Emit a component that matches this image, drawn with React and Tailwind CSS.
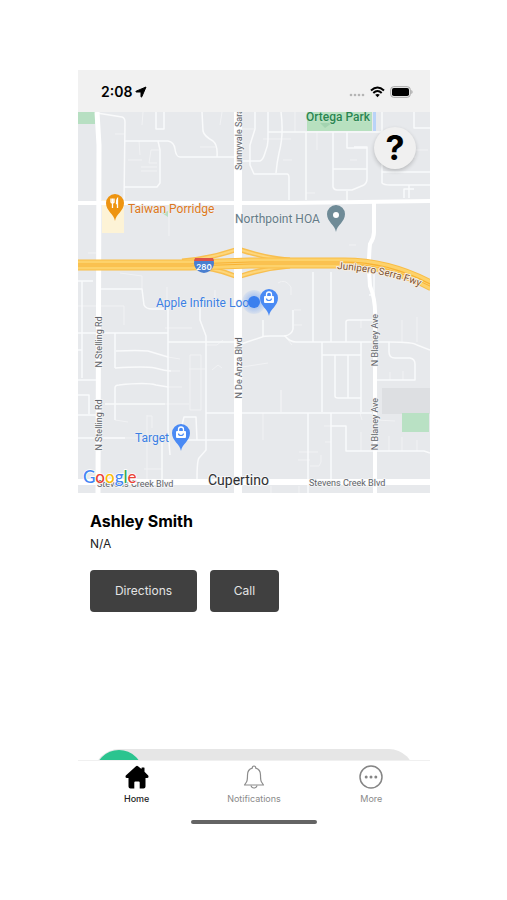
const minorRoads = [
  'M97 113L122 117Q125 118 125 122L124 203',
  'M124 141H168Q174 142 175 149Q176 157 180 157H235',
  'M156 112V129H164V112',
  'M202 112L203 131Q204 136 213 141Q218 145 217 157',
  'M124 187H157L160 183V150L158 141',
  'M255 112V129L250 145V165L254 174H287Q289 174 289 178V200',
  'M281 112Q284 135 279 153Q277 162 276 173',
  'M268 112V140Q268 146 265 153Q263 160 260 161H240',
  'M268 132H394',
  'M333 132V187Q334 190 337 190H352L364 185Q367 183 367 179V147H354',
  'M347 132V148H367',
  'M333 169H367',
  'M414 112V128H430',
  'M382 112V140',
  'M382 162V183Q384 185 390 185H430M382 172H430',
  'M306 132V200',
  'M347 191V201',
  'M409 198V185M404 198V189H414',
  'M78 281H93M82 281V378M100 289H142L144 305Q146 309 152 309H168',
  'M78 333H168M78 350H82',
  'M168 309V430L170 455',
  'M115 333V368M116 351Q138 350 148 351L168 357',
  'M115 368Q145 366 155 368Q166 371 171 371',
  'M115 420V388Q115 385 119 385Q146 382 156 385L168 387',
  'M105 404H165',
  'M168 342H235',
  'M200 300V320L206 336V450L199 458Q197 461 197 479',
  'M78 380H96M78 395H89V414M78 415H97',
  'M206 413H235M241 413H372',
  'M241 344L262 337Q264 336 270 336H285Q290 342 296 342H390Q413 342 417 345L430 350',
  'M313 272V342M331 272V342',
  'M346 342V322Q346 320 349 320H374',
  'M322 342V412M322 355H361M335 355V396Q335 398 338 398H361M348 355V398M361 342V412',
  'M389 342V352Q389 358 395 358H410Q415 359 415 364V380H376',
  'M374 270V295H369',
  'M308 413V493M331 413V479M331 426H346V451H424L430 453',
  'M181 440H235M78 438H125',
  'M182 425L184 417H196L197 440',
  'M162 440V479',
  'M293 310V329Q292 335 284 336',
  'M263 320V336',
]

const lanes = [
  'M143 112L142 125M115 134H124M139 141L140 155M159 150H151L149 163H157M141 167H157M141 171H157M200 147H217M240 129H254M263 139H291M283 160H292M317 132V150',
  'M128 160H142M220 125L222 112M295 112V132M357 160H350M428 150H415M400 157H416',
  'M169 212V236M88 253H96M306 193H315M349 245H356M120 273L142 276V289M167 287V300M215 290V305',
  'M124 306V325M165 328H192M78 306H124M190 355H201V410H190ZM189 369H205M206 345H217L223 340M212 370L218 365L222 368M168 357L180 359M168 371H180M168 387H182M165 404H189',
  'M144 469H162M147 415V479M147 416H152V428M115 420L128 422M242 367L268 363M281 390V412M263 413V440M294 310H301M294 325H302M285 336L292 345',
  'M278 283Q285 278 291 287V295M402 320V342M417 317V342M361 320V328M389 436V451M402 437V451M417 440V451M361 432V451M310 466H319L321 462V455M299 452H318M298 460H310M324 426H331M325 442H331M390 372V380M403 371V380M376 420L395 421',
  'M299 486V493M271 486V493M360 413L362 420M281 390V412M104 438H144M120 489H140',
]

const inter = "font-['Inter',sans-serif]"
const roboto = "font-['Roboto',sans-serif]"

const freeway = 'M78 265H190L250 263H340Q388 262 432 286'
const ramps = 'M182 261Q208 259 235 250M290 260Q270 259 241 250M190 267Q213 267 235 276M290 266Q265 268 241 276'

function Pin({ x, y, color, children }) {
  return (
    <g transform={`translate(${x} ${y})`}>
      <path d="M0 27C-1 20-9 17-9 9A9 9 0 1 1 9 9C9 17 1 20 0 27Z" fill={color} />
      {children}
    </g>
  )
}

function Bag() {
  return (
    <>
      <rect x="-5" y="7" width="10" height="7" rx="1" fill="#fff" />
      <path d="M-2.500 7V5.500A2.500 2.500 0 0 1 2.500 5.500V7" fill="none" stroke="#fff" strokeWidth="1.300" />
      <path d="M-2.500 9.500A2.500 2 0 0 0 2.500 9.500" fill="none" stroke="#4a8af4" strokeWidth="1.200" />
    </>
  )
}

function RoadLabel({ x, y, children, anchor = 'middle' }) {
  return (
    <text
      transform={`translate(${x} ${y}) rotate(-90)`}
      textAnchor={anchor}
      className={`${roboto} text-[9px]`}
      fill="#5f6368"
      stroke="#f4f5f6"
      strokeWidth="1.500"
      paintOrder="stroke"
    >
      {children}
    </text>
  )
}

function CityMap() {
  return (
    <svg viewBox="78 112 352 381" className="block w-full h-auto" role="img" aria-label="Map of Cupertino">
      <defs>
        <path id="junipero" d="M337 269Q385 272 427 289" />
        <radialGradient id="glow">
          <stop offset="0.5" stopColor="#4285f4" stopOpacity="0.35" />
          <stop offset="1" stopColor="#4285f4" stopOpacity="0.08" />
        </radialGradient>
      </defs>
      <rect x="78" y="112" width="352" height="381" fill="#e7e9ec" />
      <rect x="78" y="112" width="17" height="12" fill="#b7dfc2" />
      <rect x="307" y="112" width="65" height="19" fill="#b7e0bf" />
      <path d="M320 123H332L325 128Z" fill="#a3d3b0" />
      <rect x="373" y="112" width="3" height="19" fill="#b9d3f8" />
      <rect x="102" y="200" width="22" height="33" fill="#fdf3d6" />
      <rect x="382" y="388" width="48" height="26" fill="#dddfe2" />
      <rect x="402" y="413" width="27" height="19" fill="#b9e1c4" />
      <path d="M162 213L168 211L168 217Z" fill="#b7dfc2" />

      <g fill="none" stroke="#f1f2f4" strokeWidth="1">
        {lanes.map((d) => <path key={d} d={d} />)}
      </g>
      <g fill="none" stroke="#f9fafb" strokeWidth="1.500" strokeLinejoin="round">
        {minorRoads.map((d) => <path key={d} d={d} />)}
      </g>

      <g fill="none" stroke="#fff">
        <path d="M97 112L99 145L98 493" strokeWidth="5" />
        <path d="M78 203H240L292 203L430 201" strokeWidth="4" />
        <path d="M374 202V232Q374 238 370 244Q368 262 370 286Q376 300 375 320V493" strokeWidth="4" />
        <path d="M78 482H430" strokeWidth="6" />
      </g>

      {/* freeway ramps sit under the boulevard, the freeway crosses over it */}
      <g fill="none">
        <path d={ramps} stroke="#f8bf50" strokeWidth="5" />
        <path d={ramps} stroke="#fdd67c" strokeWidth="2" />
        <path d="M238 112V493" stroke="#fff" strokeWidth="8" />
        <path d={freeway} stroke="#f9bd45" strokeWidth="11" />
        <path d={freeway} stroke="#fdd26b" strokeWidth="9" />
        <path d={freeway} stroke="#f8b232" strokeWidth="3" />
        <path d={freeway} stroke="#fcd070" strokeWidth="1" />
      </g>

      <path d="M195 259H213Q215 263 213 267Q211 272 204 273Q197 272 195 267Q193 263 195 259Z" fill="#4a7fd0" />
      <path d="M195 258H213L214 261H194Z" fill="#dc5148" />
      <text x="204" y="270" textAnchor="middle" className={`${inter} text-[8px] font-semibold`} fill="#fff">280</text>

      <RoadLabel x={242} y={170} anchor="start">Sunnyvale Sara</RoadLabel>
      <RoadLabel x={102} y={342}>N Stelling Rd</RoadLabel>
      <RoadLabel x={102} y={425}>N Stelling Rd</RoadLabel>
      <RoadLabel x={242} y={368}>N De Anza Blvd</RoadLabel>
      <RoadLabel x={378} y={340}>N Blaney Ave</RoadLabel>
      <RoadLabel x={378} y={424}>N Blaney Ave</RoadLabel>

      <g className={`${roboto} text-[9px]`} fill="#5f6368" stroke="#f6f7f8" strokeWidth="1.500" paintOrder="stroke">
        <text x="97" y="487">Stevens Creek Blvd</text>
        <text x="309" y="486">Stevens Creek Blvd</text>
      </g>
      <text className={`${roboto} text-[10px]`} fill="#7d5230" stroke="#f6ede2" strokeWidth="2" paintOrder="stroke">
        <textPath href="#junipero">Junipero Serra Fwy</textPath>
      </text>

      <g className={`${roboto} text-[12px]`} stroke="#f0f1f3" strokeWidth="1" paintOrder="stroke">
        <text x="306" y="121" fill="#2a8551" className="font-medium" stroke="#c5e6cd">Ortega Park</text>
        <text x="128" y="213" fill="#dd7820">Taiwan Porridge</text>
        <text x="235" y="223" fill="#647b87">Northpoint HOA</text>
        <text x="156" y="307" fill="#3b7fe3">Apple Infinite Loo</text>
        <text x="135" y="442" fill="#3b7fe3">Target</text>
      </g>
      <text x="208" y="485" className={`${roboto} text-[14px]`} fill="#2f3033" stroke="#f6f7f8" strokeWidth="2" paintOrder="stroke">Cupertino</text>

      <Pin x={115} y={194} color="#ee9410">
        <path d="M-4 4.500V8Q-4 9-2.500 9Q-1 9-1 8V4.500M-2.500 4.500V14M2.500 14V4.500Q1.500 5.500 1.500 9.500H3" fill="none" stroke="#fff" strokeWidth="1.300" />
      </Pin>
      <Pin x={336} y={205} color="#6f8b97">
        <circle cx="0" cy="10" r="3" fill="#fff" />
      </Pin>
      <circle cx="254" cy="302" r="12" fill="url(#glow)" />
      <Pin x={269} y={289} color="#4a8af4"><Bag /></Pin>
      <circle cx="254" cy="302" r="6" fill="#3b7fee" />
      <Pin x={181} y={424} color="#4a8af4"><Bag /></Pin>

      <text x="83" y="483" className="font-['Lato',sans-serif] text-[17px] font-medium" stroke="#fff" strokeWidth="1.500" paintOrder="stroke">
        <tspan fill="#4285f4">G</tspan>
        <tspan fill="#ea4335">o</tspan>
        <tspan fill="#fbbc05">o</tspan>
        <tspan fill="#4285f4">g</tspan>
        <tspan fill="#34a853">l</tspan>
        <tspan fill="#ea4335">e</tspan>
      </text>
    </svg>
  )
}

function StatusBar() {
  return (
    <header className="flex h-[42px] items-center justify-between bg-[#f1f1f1] pl-[23px] pr-[17px] pt-[2px]">
      <div className="flex items-center gap-[3px]">
        <span className="text-[14px] leading-5 font-semibold">2:08</span>
        <svg viewBox="0 0 12 12" className="size-3">
          <path d="M11 1L6.800 10.800Q6.200 11.600 6 10.600V6H1.300Q.4 5.800 1.100 5.200Z" fill="#000" stroke="#000" strokeLinejoin="round" strokeWidth="1" />
        </svg>
      </div>
      <div className="flex items-center gap-[5px]">
        <svg viewBox="0 0 16 12" className="h-3 w-4">
          <g fill="#b5b5b5">
            <circle cx="2" cy="9" r="1.300" />
            <circle cx="6" cy="9" r="1.300" />
            <circle cx="10" cy="9" r="1.300" />
            <circle cx="14" cy="9" r="1.300" />
          </g>
        </svg>
        <svg viewBox="0 0 15 12" className="h-3 w-[15px]">
          <path d="M1 4.500Q7.500-1.500 14 4.500M3.300 7Q7.500 3 11.700 7" fill="none" stroke="#000" strokeWidth="2" />
          <path d="M5.200 8.800Q7.500 7 9.800 8.800L7.500 11.300Z" fill="#000" />
        </svg>
        <svg viewBox="0 0 23 12" className="h-3 w-[23px]">
          <rect x=".7" y=".7" width="19.600" height="10.600" rx="3" fill="none" stroke="#a5a5a5" />
          <rect x="2" y="2" width="17" height="8" rx="1.800" fill="#000" />
          <path d="M21.300 4V8Q22.600 7.500 22.600 6Q22.600 4.500 21.300 4Z" fill="#a5a5a5" />
        </svg>
      </div>
    </header>
  )
}

function HomeIcon() {
  return (
    <svg viewBox="0 0 24 24" className="size-6">
      <path d="M11 1.200Q12 .4 13 1.200L16.500 4V3Q16.500 2.500 17 2.500H19Q19.500 2.500 19.500 3V6.700L23.200 10.500Q24.200 12.800 22 13H20.500V21.500Q20.500 23.500 18.500 23.500H14.700V17.500Q14.700 16.500 13.700 16.500H10.300Q9.300 16.500 9.300 17.500V23.500H5.500Q3.500 23.500 3.500 21.500V13H2Q-.2 12.800.8 10.500Z" fill="#000" />
    </svg>
  )
}

function BellIcon() {
  return (
    <svg viewBox="0 0 24 24" className="size-6" fill="none" stroke="#8c8c8c" strokeWidth="1.200" strokeLinejoin="round">
      <path d="M10.300 3.200Q10.200 1 12 1Q13.800 1 13.700 3.200Q18.500 4.500 18.500 10Q18.500 15.500 19.500 17Q20.500 18.500 21.500 20H2.500Q3.500 18.500 4.500 17Q5.500 15.500 5.500 10Q5.500 4.500 10.300 3.200Z" />
      <path d="M9 20.500Q9.500 23 12 23Q14.500 23 15 20.500" />
    </svg>
  )
}

function MoreIcon() {
  return (
    <svg viewBox="0 0 24 24" className="size-6">
      <circle cx="12" cy="12" r="11" fill="none" stroke="#858585" strokeWidth="1.500" />
      <circle cx="7.200" cy="12" r="1.500" fill="#858585" />
      <circle cx="12" cy="12" r="1.500" fill="#858585" />
      <circle cx="16.800" cy="12" r="1.500" fill="#858585" />
    </svg>
  )
}

const tabs = [
  { label: 'Home', Icon: HomeIcon, active: true },
  { label: 'Notifications', Icon: BellIcon },
  { label: 'More', Icon: MoreIcon },
]

function TabBar() {
  return (
    <footer className="border-t border-[#f0f0f0] bg-white">
      <nav className="grid grid-cols-3 pt-1">
        {tabs.map(({ label, Icon, active }) => (
          <button
            key={label}
            type="button"
            aria-current={active ? 'page' : undefined}
            className={`flex flex-col items-center gap-1 text-[9px] leading-3 ${active ? 'font-medium text-[#222]' : 'text-[#8a8a8a]'}`}
          >
            <Icon />
            {label}
          </button>
        ))}
      </nav>
      <div className="mx-auto mt-[15px] h-1 w-[126px] rounded-full bg-[#646464]" />
    </footer>
  )
}

export default function App() {
  return (
    <div className="min-h-screen bg-white pt-[70px] pr-[77px] pl-[78px] font-['Inter',sans-serif] text-black">
      <StatusBar />
      <div className="relative">
        <CityMap />
        <button
          type="button"
          aria-label="Help"
          className="absolute top-[15px] right-[14px] flex size-[42px] items-center justify-center rounded-full bg-[#f0f0f0] text-[34px] leading-none font-bold shadow-[0_2px_4px_rgba(0,0,0,0.2)]"
        >
          ?
        </button>
      </div>
      <main>
        <section className="px-3 pt-[18px]">
          <h1 className="text-[16px] leading-5 font-bold">Ashley Smith</h1>
          <p className="mt-[5px] text-[12px] leading-4 text-[#222]">N/A</p>
          <div className="mt-[18px] flex gap-[13px]">
            <button type="button" className="h-[42px] w-[107px] rounded bg-[#404040] text-[12px] text-[#e4e4e4]">Directions</button>
            <button type="button" className="h-[42px] w-[69px] rounded bg-[#404040] text-[12px] text-[#e4e4e4]">Call</button>
          </div>
        </section>
        {/* slide control, cut off by the tab bar */}
        <div className="mt-[137px] h-[11px] overflow-hidden px-4">
          <div className="h-[50px] rounded-full bg-[#e6e6e6] p-[1px]">
            <div className="size-12 rounded-full bg-[#2bc48f]" />
          </div>
        </div>
      </main>
      <TabBar />
    </div>
  )
}
